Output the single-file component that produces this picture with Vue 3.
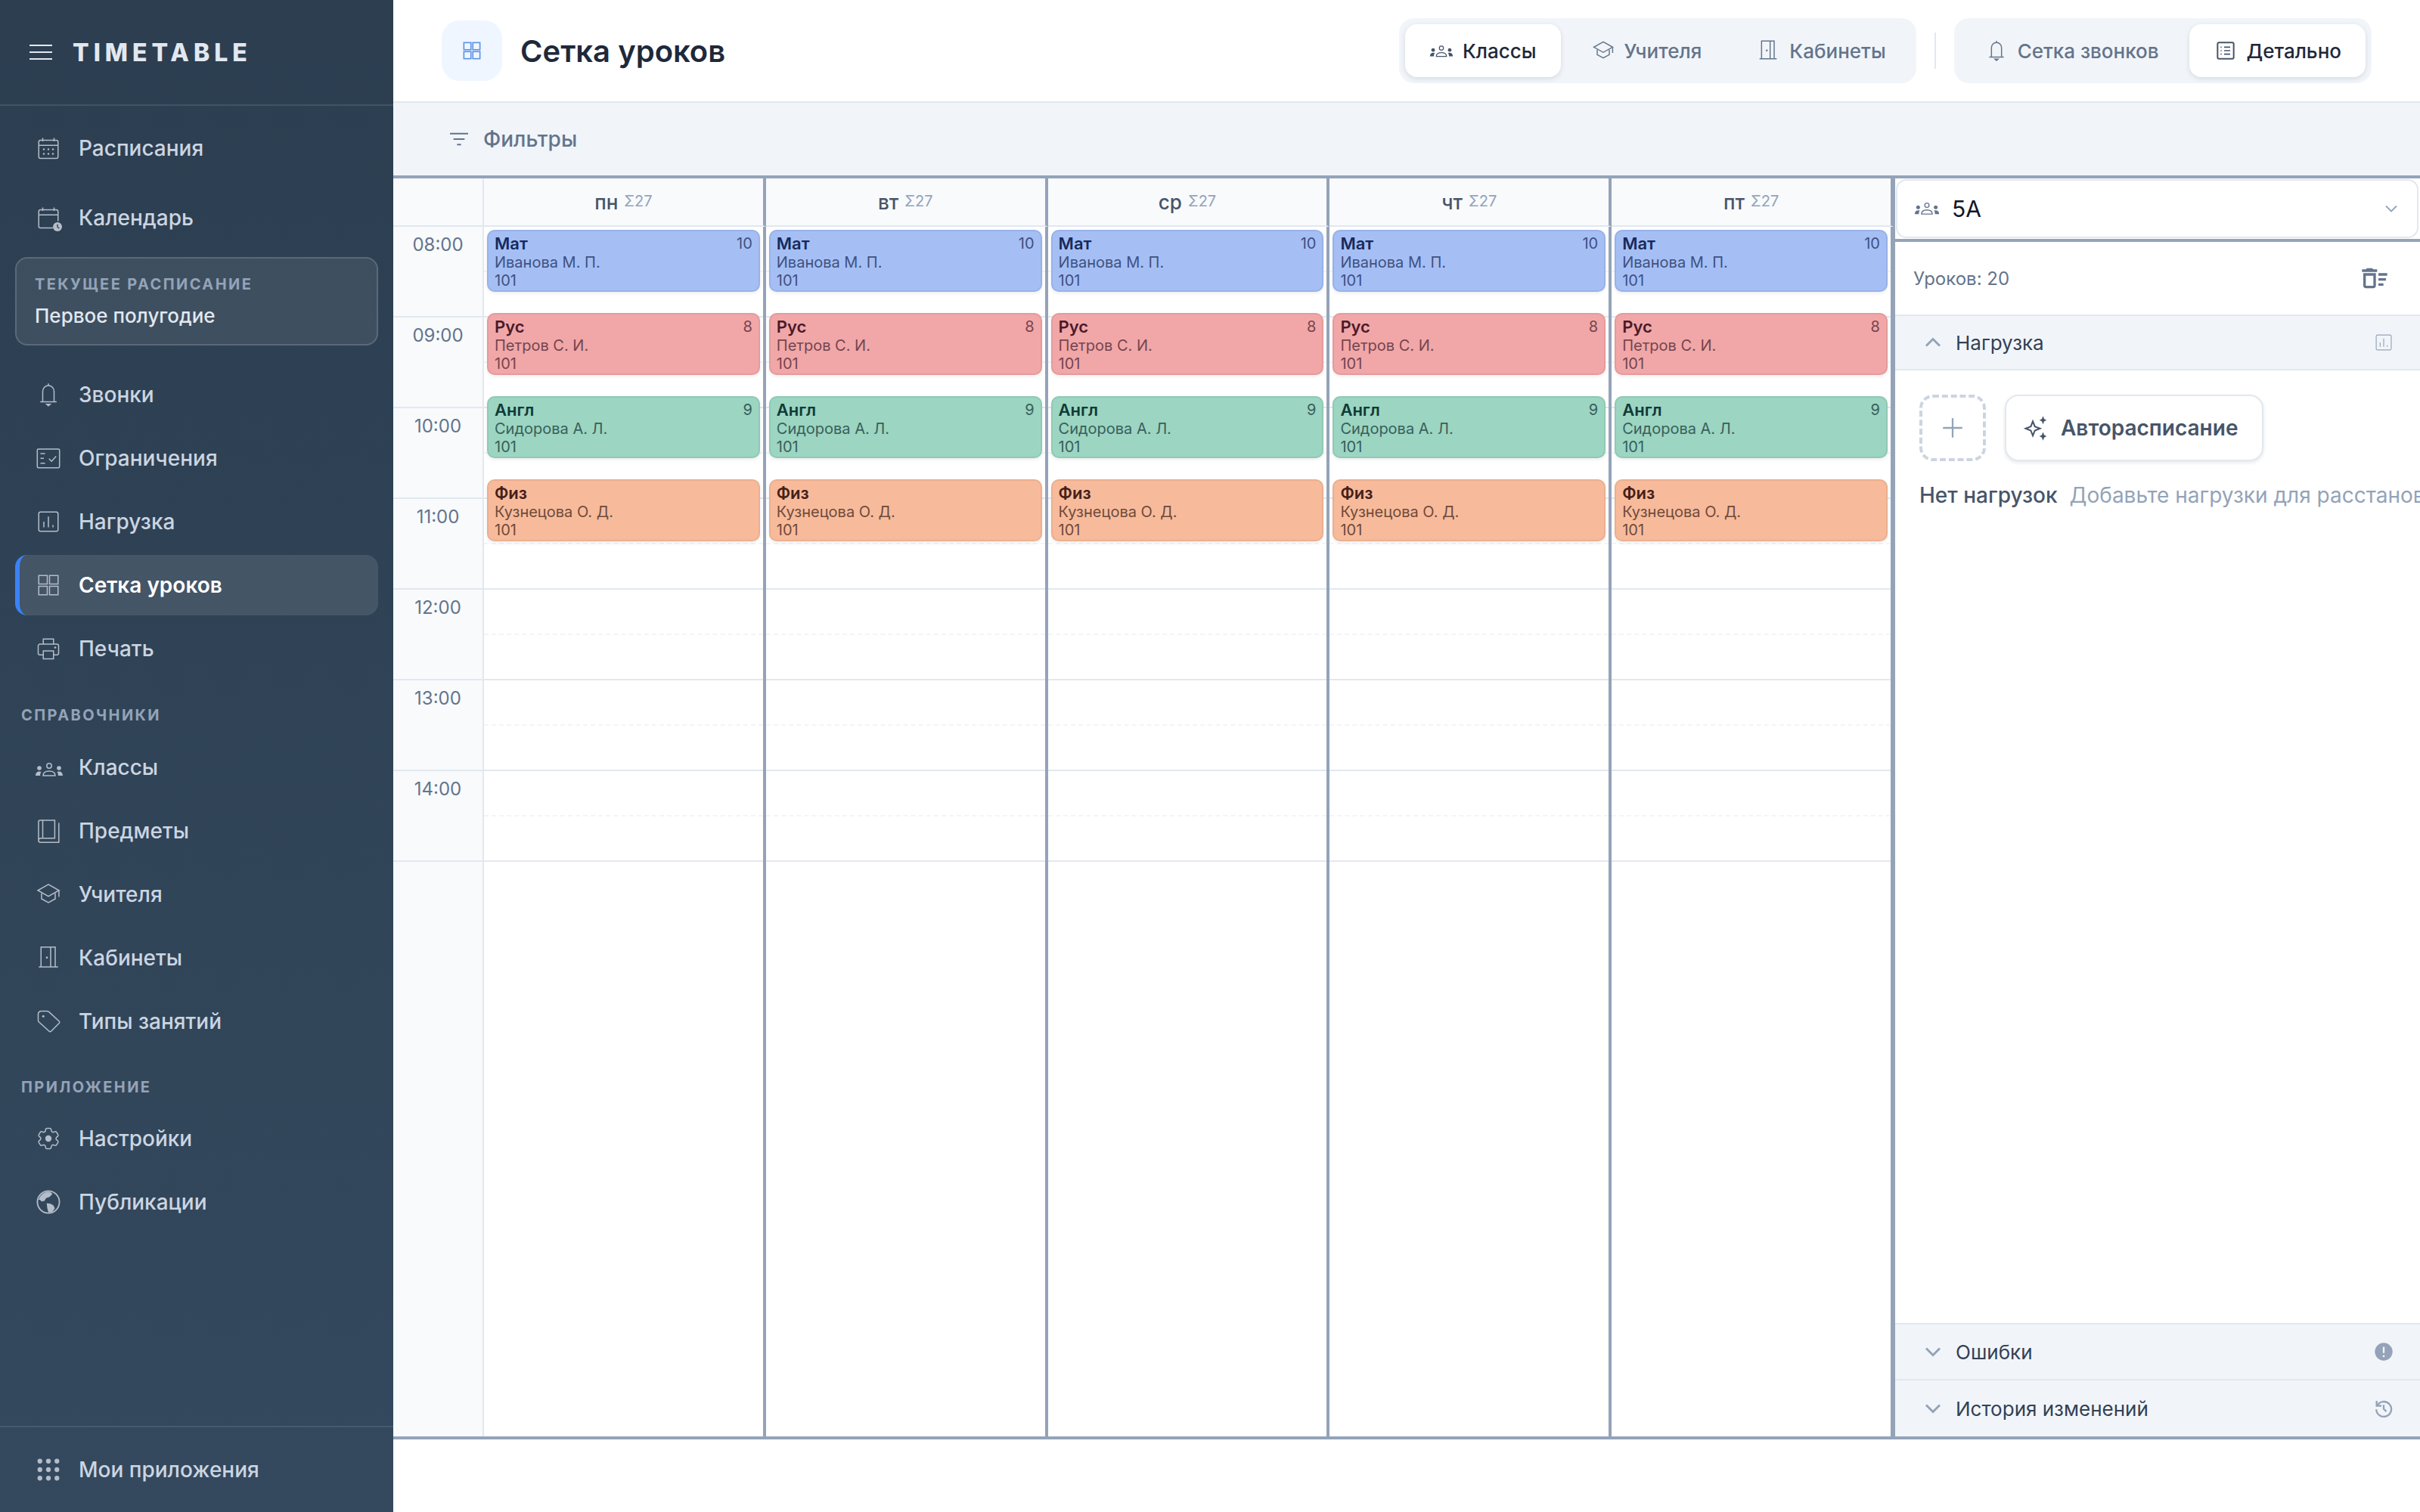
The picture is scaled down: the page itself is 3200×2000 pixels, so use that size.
<template>
  <div class="app">
    <aside class="sidebar">
      <div class="brand">
        <svg class="burger" viewBox="0 0 30 22" v-html="icons.burger"></svg>
        <span class="brand-name">TIMETABLE</span>
      </div>

      <nav class="nav-top">
        <a v-for="item in topNav" :key="item.label" class="nav-item">
          <svg class="nav-icon" viewBox="0 0 24 24" v-html="icons[item.icon]"></svg>
          {{ item.label }}
        </a>
        <div class="current">
          <div class="current-label">ТЕКУЩЕЕ РАСПИСАНИЕ</div>
          <div class="current-value">Первое полугодие</div>
        </div>
      </nav>

      <nav class="nav-list">
        <a
          v-for="item in workNav"
          :key="item.label"
          class="nav-item"
          :class="{ active: item.active }"
        >
          <svg class="nav-icon" viewBox="0 0 24 24" v-html="icons[item.icon]"></svg>
          {{ item.label }}
        </a>
      </nav>

      <div class="nav-title">СПРАВОЧНИКИ</div>
      <nav class="nav-list">
        <a v-for="item in refNav" :key="item.label" class="nav-item">
          <svg
            v-if="item.icon === 'group'"
            class="nav-icon wide"
            viewBox="0 0 38 20"
            v-html="icons.group"
          ></svg>
          <svg v-else class="nav-icon" viewBox="0 0 24 24" v-html="icons[item.icon]"></svg>
          {{ item.label }}
        </a>
      </nav>

      <div class="nav-title second">ПРИЛОЖЕНИЕ</div>
      <nav class="nav-list">
        <a v-for="item in appNav" :key="item.label" class="nav-item">
          <svg class="nav-icon" viewBox="0 0 24 24" v-html="icons[item.icon]"></svg>
          {{ item.label }}
        </a>
      </nav>

      <div class="sidebar-foot">
        <a class="nav-item">
          <svg class="nav-icon" viewBox="0 0 24 24" v-html="icons.apps"></svg>
          Мои приложения
        </a>
      </div>
    </aside>

    <main class="main">
      <header class="topbar">
        <div class="page-icon">
          <svg viewBox="0 0 24 24" v-html="icons.grid"></svg>
        </div>
        <h1 class="page-title">Сетка уроков</h1>

        <div class="toggles">
          <div class="toggle-group">
            <button
              v-for="btn in viewButtons"
              :key="btn.label"
              class="toggle"
              :class="{ on: btn.on }"
            >
              <svg :viewBox="btn.icon === 'group' ? '0 -7 38 32' : '0 0 24 24'" v-html="icons[btn.icon]"></svg>
              {{ btn.label }}
            </button>
          </div>
          <span class="toggle-divider"></span>
          <div class="toggle-group">
            <button
              v-for="btn in modeButtons"
              :key="btn.label"
              class="toggle"
              :class="{ on: btn.on }"
            >
              <svg viewBox="0 0 24 24" v-html="icons[btn.icon]"></svg>
              {{ btn.label }}
            </button>
          </div>
        </div>
      </header>

      <div class="filterbar">
        <svg viewBox="0 0 24 24" v-html="icons.filter"></svg>
        Фильтры
      </div>

      <div class="workspace">
        <section class="board">
          <div class="time-col">
            <div class="corner"></div>
            <div v-for="h in hours" :key="h" class="time-cell">{{ h }}</div>
          </div>

          <div v-for="day in days" :key="day" class="day-col">
            <div class="day-head">
              <span class="day-name">{{ day }}</span>
              <span class="day-sum">Σ27</span>
            </div>
            <div class="day-body">
              <div v-for="h in hours" :key="h" class="slot"><div class="half"></div></div>
              <div
                v-for="(lesson, i) in lessons"
                :key="lesson.title"
                class="lesson"
                :class="lesson.tone"
                :style="{ top: 4 + i * 110 + 'px' }"
              >
                <div class="lesson-top">
                  <span class="lesson-title">{{ lesson.title }}</span>
                  <span class="lesson-count">{{ lesson.count }}</span>
                </div>
                <div class="lesson-line">{{ lesson.teacher }}</div>
                <div class="lesson-line">101</div>
              </div>
            </div>
          </div>
        </section>

        <aside class="panel">
          <div class="panel-select">
            <div class="select-box">
              <svg class="select-icon" viewBox="0 0 38 20" v-html="icons.group"></svg>
              <span class="select-value">5А</span>
              <svg class="select-chevron" viewBox="0 0 24 24" v-html="icons.chevronThin"></svg>
            </div>
          </div>

          <div class="panel-count">
            <span>Уроков: 20</span>
            <svg viewBox="0 0 24 24" v-html="icons.sweep"></svg>
          </div>

          <div class="section-head">
            <svg class="section-chevron" viewBox="0 0 24 24" v-html="icons.chevronUp"></svg>
            <span>Нагрузка</span>
            <svg class="section-icon" viewBox="0 0 24 24" v-html="icons.load"></svg>
          </div>

          <div class="section-body">
            <div class="section-actions">
              <button class="add-btn">
                <svg viewBox="0 0 24 24" v-html="icons.plus"></svg>
              </button>
              <button class="auto-btn">
                <svg viewBox="0 0 24 24" v-html="icons.sparkles"></svg>
                Авторасписание
              </button>
            </div>
            <div class="empty">
              <span class="empty-title">Нет нагрузок</span>
              <span class="empty-hint">Добавьте нагрузки для расстановки уроков</span>
            </div>
          </div>

          <div class="section-head foot">
            <svg class="section-chevron" viewBox="0 0 24 24" v-html="icons.chevronDown"></svg>
            <span>Ошибки</span>
            <svg class="section-icon" viewBox="0 0 24 24" v-html="icons.alert"></svg>
          </div>
          <div class="section-head foot last">
            <svg class="section-chevron" viewBox="0 0 24 24" v-html="icons.chevronDown"></svg>
            <span>История изменений</span>
            <svg class="section-icon" viewBox="0 0 24 24" v-html="icons.history"></svg>
          </div>
        </aside>
      </div>
    </main>
  </div>
</template>

<script setup>
const calendarBase =
  '<path d="M7 3v3M17 3v3"/><rect x="3.5" y="5" width="17" height="16" rx="1.5"/><path d="M3.5 9.5h17"/>'

const icons = {
  burger: '<path d="M0 2h30M0 11h30M0 20h30" fill="none" stroke="currentColor" stroke-width="2"/>',
  calendar:
    calendarBase +
    '<g fill="currentColor" stroke="none"><circle cx="8" cy="13" r=".8"/><circle cx="12" cy="13" r=".8"/><circle cx="16" cy="13" r=".8"/><circle cx="8" cy="17" r=".8"/><circle cx="12" cy="17" r=".8"/><circle cx="16" cy="17" r=".8"/></g>',
  calendarClock:
    '<path d="M7 3v3M17 3v3M20.5 15V6.5A1.5 1.5 0 0 0 19 5H5a1.5 1.5 0 0 0-1.5 1.5v13A1.5 1.5 0 0 0 5 21h11M3.5 9.5h17"/><circle cx="20" cy="20" r="4" fill="currentColor" stroke="none"/><path d="M20 17.8V20l1.5 1.5" stroke="#34495e"/>',
  bell:
    '<path d="M12 2.2v1.6M7 18V9a5 5 0 0 1 10 0v9M4.8 18.3h14.4"/><path d="M10.5 20.5h3L12 21.8z" fill="currentColor"/>',
  check:
    '<rect x="2.2" y="4" width="19.6" height="16.5" rx="1"/><path d="M5 8h4M5 12.2h3M5 16.5h4M12.5 12.5l2.3 2.3 4-4.5"/>',
  load:
    '<rect x="3.5" y="3.5" width="17" height="17" rx="1.5"/><path d="M8 17v-5M12 17V7.5M16 17v-2"/>',
  grid:
    '<rect x="3.5" y="3.5" width="7.5" height="7.5"/><rect x="13" y="3.5" width="7.5" height="7.5"/><rect x="3.5" y="13" width="7.5" height="7.5"/><rect x="13" y="13" width="7.5" height="7.5"/>',
  printer:
    '<path d="M7.5 8V3.5h9V8M7.5 17.5H4.5A1.5 1.5 0 0 1 3 16v-6.5A1.5 1.5 0 0 1 4.5 8h15A1.5 1.5 0 0 1 21 9.5V16a1.5 1.5 0 0 1-1.5 1.5h-3"/><rect x="7.5" y="14" width="9" height="7"/><circle cx="18" cy="11" r=".9" fill="currentColor" stroke="none"/>',
  group:
    '<g fill="currentColor" stroke="none"><circle cx="6" cy="8" r="2.8"/><path d="M1 18c0-3.6 2-5.6 5.3-5.6 1 0 1.7.2 2.3.5-1 1-1.5 2.8-1.5 5.1z"/><circle cx="32" cy="8" r="2.8"/><path d="M37 18c0-3.6-2-5.6-5.3-5.6-1 0-1.7.2-2.3.5 1 1 1.5 2.8 1.5 5.1z"/></g><circle cx="19" cy="5" r="3.2" fill="none" stroke="currentColor" stroke-width="1.5"/><path d="M11 18c0-3.8 3.2-6 8-6s8 2.200 8 6z" fill="none" stroke="currentColor" stroke-width="1.5"/>',
  book:
    '<path d="M3.3 19.5V4a1.3 1.3 0 0 1 1.3-1.3h13v15.8H5.3a2 2 0 0 0-2 2 1.7 1.7 0 0 0 1.7 1.7h16.2V5"/><path d="M7 2.700v15.800"/>',
  cap:
    '<path d="M12 3.3 2.7 8.5 12 13.700l9.300-5.200z"/><path d="M6 11v5l6 3.200 6-3.200v-5M21.300 8.500v5.700"/>',
  door:
    '<path d="M3.500 20h17M5.500 20V2.500H18V20M14 2.500V20"/><circle cx="10.700" cy="11.800" r=".9" fill="currentColor" stroke="none"/>',
  tag:
    '<path d="M3 5.500A2.500 2.500 0 0 1 5.500 3H11a2 2 0 0 1 1.400.6l9 8.200a1.300 1.300 0 0 1 0 1.900l-6.900 7a1.300 1.300 0 0 1-1.900 0L3.600 12.500a2 2 0 0 1-.6-1.400z"/><circle cx="7.500" cy="7.500" r="1" fill="currentColor" stroke="none"/>',
  cog:
    '<path d="M9.594 3.940c.09-.542.56-.94 1.110-.94h2.593c.55 0 1.020.398 1.110.94l.213 1.281c.063.374.313.686.645.870.074.040.147.083.220.127.325.196.720.257 1.075.124l1.217-.456a1.125 1.125 0 0 1 1.370.490l1.296 2.247a1.125 1.125 0 0 1-.26 1.431l-1.003.827c-.293.241-.438.613-.43.992a7.723 7.723 0 0 1 0 .255c-.008.378.137.750.43.991l1.004.827c.424.350.534.955.26 1.430l-1.298 2.247a1.125 1.125 0 0 1-1.369.491l-1.217-.456c-.355-.133-.75-.072-1.076.124a6.470 6.470 0 0 1-.22.128c-.331.183-.581.495-.644.869l-.213 1.281c-.09.543-.56.94-1.110.94h-2.594c-.55 0-1.019-.398-1.110-.94l-.213-1.281c-.062-.374-.312-.686-.644-.870a6.520 6.520 0 0 1-.22-.127c-.325-.196-.72-.257-1.076-.124l-1.217.456a1.125 1.125 0 0 1-1.369-.490l-1.297-2.247a1.125 1.125 0 0 1 .26-1.431l1.004-.827c.292-.24.437-.613.43-.991a6.932 6.932 0 0 1 0-.255c.007-.38-.138-.751-.43-.992l-1.004-.827a1.125 1.125 0 0 1-.26-1.430l1.297-2.247a1.125 1.125 0 0 1 1.370-.491l1.216.456c.356.133.751.072 1.076-.124.072-.044.146-.086.220-.128.332-.183.582-.495.644-.869l.214-1.280z"/><circle cx="12" cy="12" r="2.800" fill="currentColor" stroke="none"/>',
  globe:
    '<circle cx="12" cy="12" r="9.700" stroke-width="1.200"/><path d="M3.300 10C4.800 6 8 3 12 2.800c1.500 0 3 1 3.500 2.200l-2.500 2.500-3 1-1.500 2.500-2.500.5-1.500-1.500zM10.500 13l3.500.5 2.500 1.500 1.200 2.500-2 2.800c-1.500.8-3 1-3.700.8L11 17.500z" fill="currentColor" stroke="none"/>',
  apps:
    '<g fill="currentColor" stroke="none"><circle cx="4.500" cy="4.500" r="2.100"/><circle cx="12" cy="4.500" r="2.100"/><circle cx="19.500" cy="4.500" r="2.100"/><circle cx="4.500" cy="12" r="2.100"/><circle cx="12" cy="12" r="2.100"/><circle cx="19.500" cy="12" r="2.100"/><circle cx="4.500" cy="19.500" r="2.100"/><circle cx="12" cy="19.500" r="2.100"/><circle cx="19.500" cy="19.500" r="2.100"/></g>',
  details:
    '<rect x="4" y="4" width="16" height="16" rx="1.500" stroke-width="1.500"/><path d="M10.500 8.500h6M10.500 12h6M10.500 15.500h6M7 8.500h1M7 12h1M7 15.500h1" stroke-width="1.200"/>',
  filter: '<path d="M3 6.500h18M6.500 12h11M10 17.500h4" stroke-width="1.500"/>',
  chevronDown: '<path d="m6 9 6 6 6-6" stroke-width="2"/>',
  chevronThin: '<path d="m6 9 6 6 6-6" stroke-width="1.600"/>',
  chevronUp: '<path d="m6 15 6-6 6 6" stroke-width="2"/>',
  sweep:
    '<path fill="currentColor" stroke="none" d="M15 16h4v2h-4v-2zm0-8h7v2h-7V8zm0 4h6v2h-6v-2zM3 18c0 1.100.9 2 2 2h6c1.100 0 2-.9 2-2V8H3v10zm2-8h6v8H5v-8zm5-6H6L5 5H2v2h12V5h-3l-1-1z"/>',
  plus: '<path d="M12 3v18M3 12h18" stroke-width="1.600"/>',
  sparkles:
    '<g fill="currentColor" stroke="none"><path d="M18 2l1 2.500 2 1-2 1-1 2.500-1-2.500-2-1 2-1zM18 15.500l1 2.500 2 1-2 1-1 2.500-1-2.500-2-1 2-1z"/></g><path d="M9.500 6.500l1.700 4.300 4.300 1.700-4.300 1.700-1.700 4.300-1.700-4.300-4.300-1.700 4.300-1.700z" stroke-width="1.300"/>',
  alert:
    '<circle cx="12" cy="12" r="10" fill="currentColor" stroke="none"/><path d="M12 6.500v7" stroke="#f1f5f9" stroke-width="2"/><circle cx="12" cy="17" r="1.200" fill="#f1f5f9" stroke="none"/>',
  history:
    '<path d="M4.500 9a8.500 8.500 0 1 1-.9 4" stroke-width="2"/><path d="M4 3.500V9h5.500" stroke-width="2"/><path d="M12 8v4.500l3 3" stroke-width="2"/>',
}

const topNav = [
  { label: 'Расписания', icon: 'calendar' },
  { label: 'Календарь', icon: 'calendarClock' },
]

const workNav = [
  { label: 'Звонки', icon: 'bell' },
  { label: 'Ограничения', icon: 'check' },
  { label: 'Нагрузка', icon: 'load' },
  { label: 'Сетка уроков', icon: 'grid', active: true },
  { label: 'Печать', icon: 'printer' },
]

const refNav = [
  { label: 'Классы', icon: 'group' },
  { label: 'Предметы', icon: 'book' },
  { label: 'Учителя', icon: 'cap' },
  { label: 'Кабинеты', icon: 'door' },
  { label: 'Типы занятий', icon: 'tag' },
]

const appNav = [
  { label: 'Настройки', icon: 'cog' },
  { label: 'Публикации', icon: 'globe' },
]

const viewButtons = [
  { label: 'Классы', icon: 'group', on: true },
  { label: 'Учителя', icon: 'cap' },
  { label: 'Кабинеты', icon: 'door' },
]

const modeButtons = [
  { label: 'Сетка звонков', icon: 'bell' },
  { label: 'Детально', icon: 'details', on: true },
]

const hours = ['08:00', '09:00', '10:00', '11:00', '12:00', '13:00', '14:00']
const days = ['пн', 'вт', 'ср', 'чт', 'пт']

const lessons = [
  { title: 'Мат', count: 10, teacher: 'Иванова М. П.', tone: 'blue' },
  { title: 'Рус', count: 8, teacher: 'Петров С. И.', tone: 'red' },
  { title: 'Англ', count: 9, teacher: 'Сидорова А. Л.', tone: 'green' },
  { title: 'Физ', count: '', teacher: 'Кузнецова О. Д.', tone: 'orange' },
]
</script>

<style>
body {
  margin: 0;
  background: #fff;
}
</style>

<style scoped>
.app {
  display: flex;
  width: 3200px;
  height: 2000px;
  overflow: hidden;
  font-family: Inter, "Noto Sans", sans-serif;
  color: #1e293b;
}

svg {
  fill: none;
  stroke: currentColor;
  stroke-width: 1;
  flex: none;
}

/* sidebar */
.sidebar {
  width: 520px;
  flex: none;
  display: flex;
  flex-direction: column;
  box-sizing: border-box;
  background: linear-gradient(180deg, #2c3e50 0%, #34495e 100%);
  color: #cbd5e1;
}

.brand {
  height: 138px;
  flex: none;
  display: flex;
  align-items: center;
  gap: 27px;
  padding-left: 39px;
  border-bottom: 2px solid rgba(255, 255, 255, 0.1);
  color: #e2e8f0;
}

.burger {
  width: 30px;
  height: 22px;
}

.brand-name {
  font-size: 32px;
  font-weight: 800;
  letter-spacing: 6px;
}

.nav-top {
  display: flex;
  flex-direction: column;
  gap: 12px;
  padding: 16px 20px 0;
}

.nav-list {
  display: flex;
  flex-direction: column;
  gap: 4px;
  padding: 0 20px;
}

.nav-top + .nav-list {
  margin-top: 25px;
}

.nav-item {
  height: 80px;
  box-sizing: border-box;
  display: flex;
  align-items: center;
  gap: 22px;
  padding-left: 26px;
  border-radius: 16px;
  font-size: 28px;
  font-weight: 500;
  color: #cbd5e1;
}

.nav-item.active {
  padding-left: 20px;
  border-left: 6px solid #3b82f6;
  background: rgba(255, 255, 255, 0.1);
  color: #fff;
  font-weight: 600;
}

.nav-icon {
  width: 36px;
  height: 36px;
  color: #b4bdc9;
}

.nav-icon.wide {
  width: 38px;
  height: 20px;
  margin: 6px -2px 0 0;
  stroke: none;
}

.current {
  box-sizing: border-box;
  height: 117px;
  padding: 22px 24px 0;
  background: rgba(255, 255, 255, 0.08);
  border: 2px solid rgba(255, 255, 255, 0.15);
  border-radius: 16px;
}

.current-label {
  font-size: 20px;
  line-height: 24px;
  font-weight: 700;
  letter-spacing: 2.4px;
  color: #94a3b8;
}

.current-value {
  margin-top: 14px;
  font-size: 26px;
  line-height: 32px;
  font-weight: 500;
  color: #e2e8f0;
}

.nav-title {
  margin: 36px 0 17px 28px;
  font-size: 20px;
  line-height: 24px;
  font-weight: 700;
  letter-spacing: 2.4px;
  color: #94a3b8;
}

.nav-title.second {
  margin: 35px 0 16px 28px;
}

.sidebar-foot {
  margin-top: auto;
  height: 114px;
  box-sizing: border-box;
  padding: 16px 20px 0;
  border-top: 2px solid rgba(255, 255, 255, 0.1);
}

/* main */
.main {
  flex: 1;
  min-width: 0;
  display: flex;
  flex-direction: column;
  background: #fff;
}

.topbar {
  height: 136px;
  flex: none;
  box-sizing: border-box;
  display: flex;
  align-items: center;
  padding: 0 64px;
  border-bottom: 2px solid #e2e8f0;
}

.page-icon {
  width: 80px;
  height: 80px;
  border-radius: 24px;
  background: #eff6ff;
  display: flex;
  align-items: center;
  justify-content: center;
  color: #5b93e6;
}

.page-icon svg {
  width: 30px;
  height: 30px;
  stroke-width: 1.3;
}

.page-title {
  margin: 0 0 0 24px;
  font-size: 40px;
  font-weight: 600;
  color: #1e293b;
}

.toggles {
  margin-left: auto;
  display: flex;
  align-items: center;
  gap: 24px;
}

.toggle-group {
  display: flex;
  gap: 8px;
  padding: 8px;
  background: #f1f5f9;
  border-radius: 20px;
}

.toggle {
  height: 70px;
  display: flex;
  align-items: center;
  gap: 12px;
  padding: 0 32px;
  border: 0;
  border-radius: 16px;
  background: transparent;
  font-family: inherit;
  font-size: 26px;
  font-weight: 500;
  color: #64748b;
}

.toggle svg {
  width: 32px;
  height: 32px;
  stroke-width: 1.1;
}

.toggle.on {
  background: #fff;
  color: #1e293b;
  box-shadow: 0 2px 6px rgba(15, 23, 42, 0.12);
}

.toggle.on svg {
  color: #475569;
}

.toggle-divider {
  width: 2px;
  height: 48px;
  background: #e2e8f0;
}

.filterbar {
  height: 96px;
  flex: none;
  box-sizing: border-box;
  display: flex;
  align-items: center;
  gap: 16px;
  padding-left: 71px;
  background: #f1f5f9;
  font-size: 28px;
  font-weight: 500;
  color: #64748b;
}

.filterbar svg {
  width: 32px;
  height: 32px;
}

.workspace {
  flex: none;
  height: 1672px;
  box-sizing: border-box;
  display: flex;
  border-top: 4px solid #94a3b8;
  border-bottom: 4px solid #94a3b8;
}

/* timetable */
.board {
  flex: 1;
  min-width: 0;
  display: flex;
}

.time-col {
  width: 120px;
  flex: none;
  box-sizing: border-box;
  background: #f8fafc;
  border-right: 2px solid #e2e8f0;
}

.corner {
  height: 64px;
  box-sizing: border-box;
  border-bottom: 2px solid #e2e8f0;
}

.time-cell {
  height: 120px;
  box-sizing: border-box;
  padding-top: 9px;
  border-bottom: 2px solid #e2e8f0;
  font-size: 24px;
  line-height: 30px;
  text-align: center;
  color: #64748b;
}

.day-col {
  flex: 1;
  min-width: 0;
  display: flex;
  flex-direction: column;
}

.day-head {
  height: 64px;
  flex: none;
  box-sizing: border-box;
  display: flex;
  align-items: center;
  justify-content: center;
  gap: 8px;
  background: #f8fafc;
  border-right: 4px solid #94a3b8;
  border-bottom: 2px solid #e2e8f0;
}

.day-name {
  font-size: 26px;
  font-weight: 500;
  color: #475569;
}

.day-sum {
  font-size: 20px;
  color: #94a3b8;
  margin-top: -3px;
}

.day-body {
  flex: 1;
  position: relative;
  border-right: 4px solid #94a3b8;
}

.slot {
  height: 120px;
  box-sizing: border-box;
  border-bottom: 2px solid #e2e8f0;
}

.half {
  height: 60px;
  box-sizing: border-box;
  border-bottom: 2px dashed #f1f5f9;
}

.lesson {
  position: absolute;
  left: 4px;
  right: 4px;
  height: 82px;
  box-sizing: border-box;
  padding: 4px 8px;
  border: 2px solid;
  border-radius: 10px;
  box-shadow: 0 2px 4px rgba(15, 23, 42, 0.08);
  font-size: 20px;
  line-height: 24px;
}

.lesson-top {
  display: flex;
  justify-content: space-between;
  height: 25px;
}

.lesson-title {
  font-size: 22px;
  font-weight: 600;
  color: var(--ink);
}

.lesson-count,
.lesson-line {
  color: var(--ink-soft);
  white-space: nowrap;
}

.lesson.blue {
  --ink: #172a5c;
  --ink-soft: #3f5180;
  background: #a5bff5;
  border-color: #98b2e8;
}

.lesson.red {
  --ink: #4a1a2a;
  --ink-soft: #744550;
  background: #f1a7a7;
  border-color: #e59b9b;
}

.lesson.green {
  --ink: #0f3a38;
  --ink-soft: #37605c;
  background: #9cd5c1;
  border-color: #90c9b5;
}

.lesson.orange {
  --ink: #45201a;
  --ink-soft: #6f4a3c;
  background: #f7bb9b;
  border-color: #ebaf8f;
}

/* right panel */
.panel {
  width: 696px;
  flex: none;
  box-sizing: border-box;
  display: flex;
  flex-direction: column;
  border-left: 2px solid #94a3b8;
  background: #fff;
  overflow: hidden;
}

.panel-select {
  height: 84px;
  flex: none;
  box-sizing: border-box;
  padding: 1px 2px 0 1px;
  border-bottom: 4px solid #94a3b8;
}

.select-box {
  height: 78px;
  box-sizing: border-box;
  display: flex;
  align-items: center;
  padding: 0 20px 0 22px;
  border: 2px solid #e2e8f0;
  border-radius: 14px;
}

.select-icon {
  width: 34px;
  height: 18px;
  color: #64748b;
  stroke: none;
}

.select-value {
  margin-left: 16px;
  font-size: 30px;
  font-weight: 400;
  color: #0f172a;
}

.select-chevron {
  margin-left: auto;
  width: 28px;
  height: 28px;
  color: #94a3b8;
}

.panel-count {
  height: 96px;
  flex: none;
  box-sizing: border-box;
  display: flex;
  align-items: center;
  justify-content: space-between;
  padding: 0 40px 0 24px;
  font-size: 24px;
  color: #64748b;
}

.panel-count svg {
  width: 40px;
  height: 40px;
}

.section-head {
  height: 74px;
  flex: none;
  box-sizing: border-box;
  display: flex;
  align-items: center;
  padding: 0 34px 0 32px;
  background: #f1f5f9;
  border-top: 2px solid #e2e8f0;
  border-bottom: 2px solid #e2e8f0;
  font-size: 26px;
  color: #334155;
}

.section-head.foot {
  border-bottom: 0;
}

.section-head.last {
  height: 76px;
}

.section-chevron {
  width: 36px;
  height: 36px;
  margin-right: 12px;
  color: #94a3b8;
}

.section-icon {
  margin-left: auto;
  width: 28px;
  height: 28px;
  color: #94a3b8;
}

.section-body {
  flex: 1;
  min-height: 0;
  padding: 32px 0 0 32px;
}

.section-actions {
  display: flex;
  gap: 25px;
}

.add-btn {
  width: 88px;
  height: 88px;
  box-sizing: border-box;
  display: flex;
  align-items: center;
  justify-content: center;
  padding: 0;
  background: transparent;
  border: 4px dashed #cbd5e1;
  border-radius: 18px;
  color: #94a3b8;
}

.add-btn svg {
  width: 34px;
  height: 34px;
}

.auto-btn {
  height: 88px;
  box-sizing: border-box;
  display: flex;
  align-items: center;
  gap: 14px;
  padding: 0 32px 0 20px;
  background: #fff;
  border: 2px solid #e2e8f0;
  border-radius: 18px;
  box-shadow: 0 2px 5px rgba(15, 23, 42, 0.1);
  font-family: inherit;
  font-size: 28px;
  font-weight: 600;
  color: #475569;
}

.auto-btn svg {
  width: 38px;
  height: 38px;
}

.empty {
  margin-top: 28px;
  display: flex;
  gap: 16px;
  font-size: 28px;
  line-height: 34px;
  white-space: nowrap;
}

.empty-title {
  font-weight: 500;
  color: #475569;
}

.empty-hint {
  color: #94a3b8;
}
</style>
